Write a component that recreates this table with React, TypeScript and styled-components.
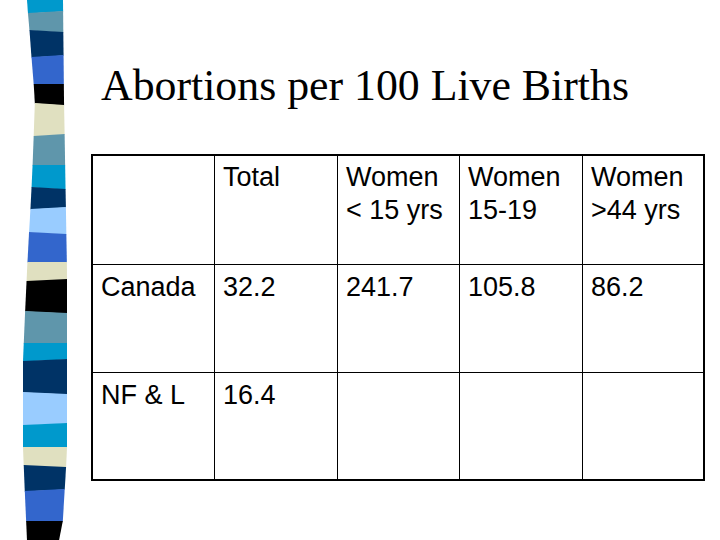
import React from "react";
import styled, { createGlobalStyle } from "styled-components";

const Global = createGlobalStyle`
  html, body { margin: 0; padding: 0; background: #ffffff; }
  #root { width: 720px; height: 540px; }
`;

const Slide = styled.div`
  width: 720px;
  height: 540px;
  display: flex;
  background: #ffffff;
  overflow: hidden;
`;

const StripeSvg = styled.svg`
  flex: none;
  display: block;
  width: 70px;
  height: 540px;
`;

const Content = styled.div`
  flex: 1;
  display: flex;
  flex-direction: column;
  padding: 63px 0 0 21px;
`;

const Title = styled.h1`
  margin: 0 0 47px 10px;
  font-family: "Liberation Serif", "Times New Roman", serif;
  font-weight: normal;
  font-size: 43.8px;
  line-height: 44px;
  color: #000000;
  white-space: nowrap;
`;

const Grid = styled.div`
  display: grid;
  grid-template-columns: 122px 123px 122px 123px 120px;
  grid-template-rows: 109px 108px 106px;
  width: 610px;
  border: 2px solid #000000;
  font-family: "Liberation Sans", Arial, sans-serif;
  font-size: 27px;
  line-height: 33px;
  color: #000000;
`;

const Cell = styled.div<{ $lastCol?: boolean; $lastRow?: boolean; $header?: boolean }>`
  box-sizing: border-box;
  padding: ${(p) => (p.$header ? "5px" : "6px")} 4px 0 8px;
  border-right: ${(p) => (p.$lastCol ? "none" : "1px solid #000000")};
  border-bottom: ${(p) => (p.$lastRow ? "none" : "1px solid #000000")};
  white-space: nowrap;
`;

type Seg = [number, number, string];

const C = "#0099cc";
const S = "#5f96ab";
const N = "#003366";
const R = "#3366cc";
const K = "#000000";
const B = "#e0e0c0";
const L = "#99ccff";

const segs: Seg[] = [
  [0, 12, C],
  [12, 31, S],
  [31, 56, N],
  [56, 84, R],
  [84, 104, K],
  [104, 135, B],
  [135, 165, S],
  [165, 188, C],
  [188, 208, N],
  [208, 233, L],
  [233, 262, R],
  [262, 280, B],
  [280, 312, K],
  [312, 343, S],
  [343, 360, C],
  [360, 393, N],
  [393, 424, L],
  [424, 447, C],
  [447, 466, B],
  [466, 490, N],
  [490, 521, R],
  [521, 540, K],
];

const leftPts: [number, number][] = [
  [0, 27], [100, 35], [180, 32], [270, 27], [360, 23], [450, 23], [540, 27],
];
const rightPts: [number, number][] = [
  [0, 63], [100, 64], [270, 67], [450, 67], [520, 63], [540, 59],
];

function interp(pts: [number, number][], y: number): number {
  for (let i = 0; i < pts.length - 1; i++) {
    const [y0, x0] = pts[i];
    const [y1, x1] = pts[i + 1];
    if (y >= y0 && y <= y1) {
      return x0 + ((x1 - x0) * (y - y0)) / (y1 - y0);
    }
  }
  return pts[pts.length - 1][1];
}

function tilt(i: number): number {
  const t = [0, 1, -1, 1, 0, -1, 1, 0, -1, 1, -1, 0, 1, -1, 0, 1, -1, 1, 0, -1, 1, 0];
  return t[i % t.length];
}

const Stripe = () => (
  <StripeSvg viewBox="0 0 70 540">
    {segs.map(([y0, y1, color], i) => {
      const ta = i === 0 ? 0 : tilt(i);
      const tb = i === segs.length - 1 ? 0 : tilt(i + 1);
      const lt = interp(leftPts, y0);
      const rt = interp(rightPts, y0);
      const lb = interp(leftPts, y1);
      const rb = interp(rightPts, y1);
      const pts = `${lt},${y0 + ta} ${rt},${y0 - ta} ${rb},${y1 - tb + 0.6} ${lb},${y1 + tb + 0.6}`;
      return <polygon key={i} points={pts} fill={color} />;
    })}
  </StripeSvg>
);

const rows: string[][] = [
  ["", "Total", "Women\n< 15 yrs", "Women\n15-19", "Women\n>44 yrs"],
  ["Canada", "32.2", "241.7", "105.8", "86.2"],
  ["NF & L", "16.4", "", "", ""],
];

export default function App() {
  return (
    <>
      <Global />
      <Slide>
        <Stripe />
        <Content>
          <Title>Abortions per 100 Live Births</Title>
          <Grid>
            {rows.map((row, r) =>
              row.map((text, c) => (
                <Cell
                  key={`${r}-${c}`}
                  $header={r === 0}
                  $lastCol={c === row.length - 1}
                  $lastRow={r === rows.length - 1}
                >
                  {text.split("\n").map((line, k) => (
                    <div key={k}>{line}</div>
                  ))}
                </Cell>
              ))
            )}
          </Grid>
        </Content>
      </Slide>
    </>
  );
}
